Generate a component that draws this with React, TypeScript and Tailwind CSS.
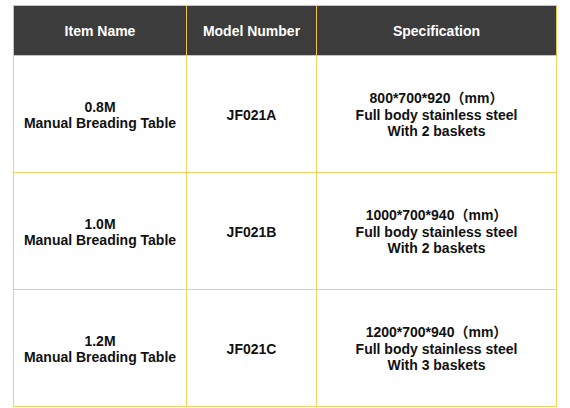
import React from "react";

const rows = [
  { size: "0.8M", model: "JF021A", dim: "800*700*920（mm）", baskets: "With 2 baskets" },
  { size: "1.0M", model: "JF021B", dim: "1000*700*940（mm）", baskets: "With 2 baskets" },
  { size: "1.2M", model: "JF021C", dim: "1200*700*940（mm）", baskets: "With 3 baskets" },
];

export default function App() {
  return (
    <div
      className="w-[570px] h-[408px] bg-white overflow-hidden pt-[5px] pl-[13px]"
      style={{ fontFamily: '"Liberation Sans", "Noto Sans CJK SC", Arial, sans-serif' }}
    >
      <table className="border-collapse table-fixed w-[543px] text-[14px] font-bold leading-[16.5px]">
        <colgroup>
          <col className="w-[173px]" />
          <col className="w-[130px]" />
          <col className="w-[240px]" />
        </colgroup>
        <thead>
          <tr className="h-[50px] bg-[#3c3c3c] text-white">
            <th className="border-[1.5px] border-[#f3c34a] text-center align-middle font-bold pt-[2px]">Item Name</th>
            <th className="border-[1.5px] border-[#f3c34a] text-center align-middle font-bold pt-[2px]">Model Number</th>
            <th className="border-[1.5px] border-[#f3c34a] text-center align-middle font-bold pt-[2px]">Specification</th>
          </tr>
        </thead>
        <tbody className="text-[#111111]">
          {rows.map((r) => (
            <tr key={r.model} className="h-[117px]">
              <td className="border-[1.5px] border-[#f7d064] text-center align-middle pt-[2px]">
                {r.size}
                <br />
                Manual Breading Table
              </td>
              <td className="border-[1.5px] border-[#f7d064] text-center align-middle pt-[2px]">{r.model}</td>
              <td className="border-[1.5px] border-[#f7d064] text-center align-middle pt-[2px]">
                {r.dim}
                <br />
                Full body stainless steel
                <br />
                {r.baskets}
              </td>
            </tr>
          ))}
        </tbody>
      </table>
    </div>
  );
}
